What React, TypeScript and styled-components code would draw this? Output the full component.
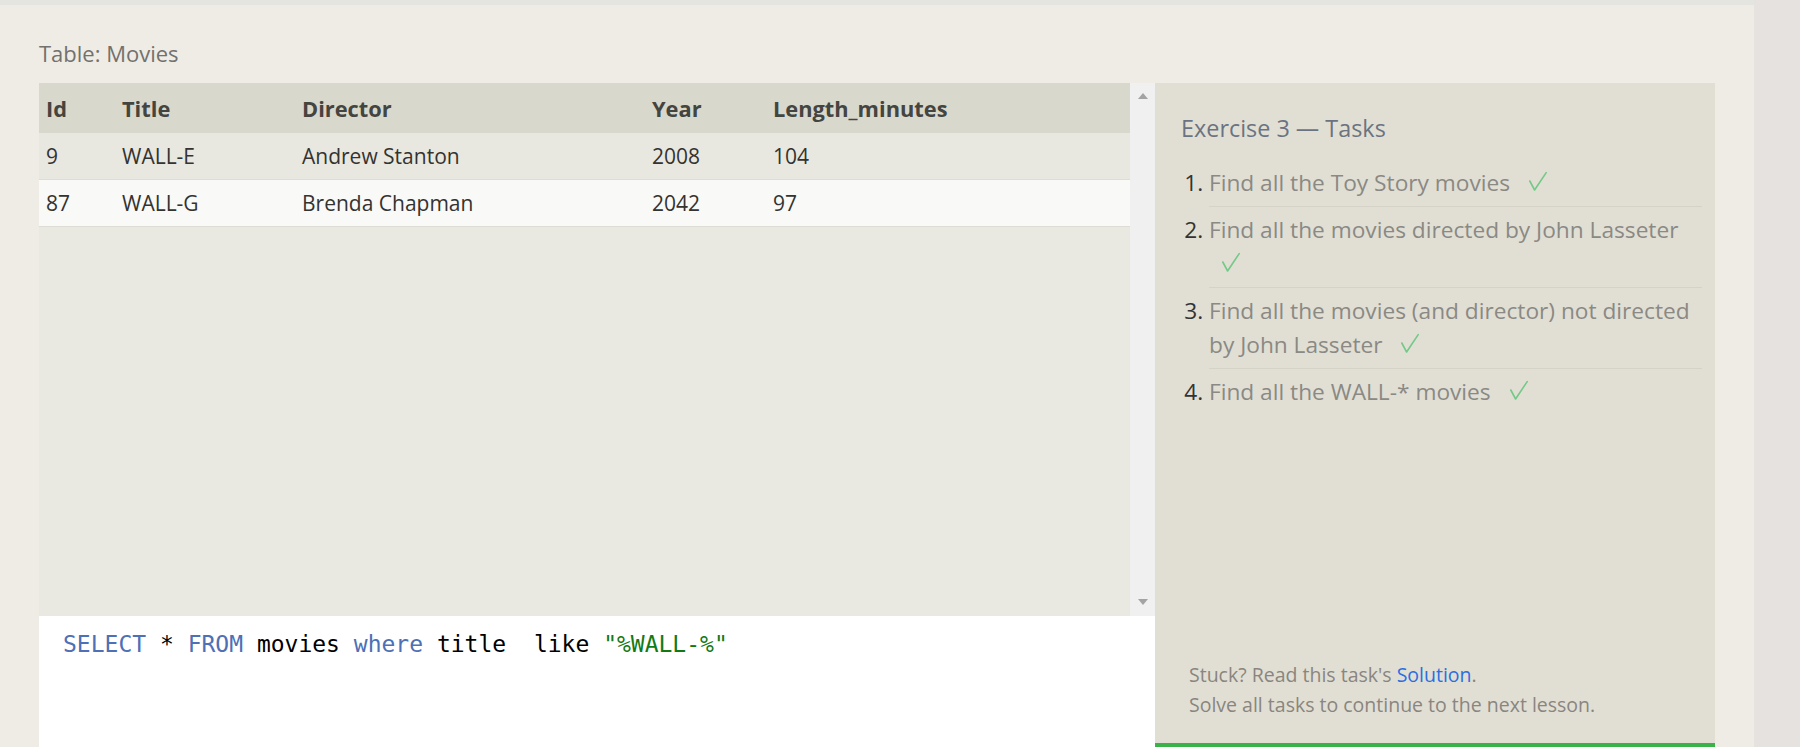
import styled, { createGlobalStyle } from "styled-components";

const GlobalStyle = createGlobalStyle`
  html, body {
    margin: 0;
    padding: 0;
    height: 747px;
    overflow: hidden;
  }
  body {
    font-family: "Open Sans", "Liberation Sans", sans-serif;
    background-color: #efece5;
  }
`;

type Movie = {
  id: number;
  title: string;
  director: string;
  year: number;
  length: number;
};

const movies: Movie[] = [
  { id: 9, title: "WALL-E", director: "Andrew Stanton", year: 2008, length: 104 },
  { id: 87, title: "WALL-G", director: "Brenda Chapman", year: 2042, length: 97 },
];

const columns = ["Id", "Title", "Director", "Year", "Length_minutes"];
const colWidths = [76, 180, 350, 121];

const tasks = [
  "Find all the Toy Story movies",
  "Find all the movies directed by John Lasseter",
  "Find all the movies (and director) not directed by John Lasseter",
  "Find all the WALL-* movies",
];

function Check() {
  return (
    <CheckMark width="18" height="19" viewBox="0 0 18 19">
      <polyline points="0.8,9 5.6,18 17.2,0.6" />
    </CheckMark>
  );
}

function App() {
  return (
    <Page>
      <GlobalStyle />
      <Main>
        <Caption>Table: Movies</Caption>
        <Workspace>
          <LeftColumn>
            <ResultsPane>
              <TableArea>
                <Table>
                  <colgroup>
                    {colWidths.map((w, i) => (
                      <col key={i} style={{ width: w }} />
                    ))}
                    <col />
                  </colgroup>
                  <thead>
                    <tr>
                      {columns.map((c) => (
                        <HeadCell key={c}>{c}</HeadCell>
                      ))}
                    </tr>
                  </thead>
                  <tbody>
                    {movies.map((m, i) => (
                      <Row key={m.id} $odd={i % 2 === 1}>
                        <Cell>{m.id}</Cell>
                        <Cell>{m.title}</Cell>
                        <Cell>{m.director}</Cell>
                        <Cell>{m.year}</Cell>
                        <Cell>{m.length}</Cell>
                      </Row>
                    ))}
                  </tbody>
                </Table>
              </TableArea>
              <ScrollTrack>
                <Arrow $dir="up" />
                <Arrow $dir="down" />
              </ScrollTrack>
            </ResultsPane>
            <Editor>
              <Code>
                <Keyword>SELECT</Keyword> * <Keyword>FROM</Keyword> movies{" "}
                <Keyword>where</Keyword> title{"  "}like{" "}
                <Str>"%WALL-%"</Str>
              </Code>
            </Editor>
          </LeftColumn>
          <TaskPanel>
            <TaskTitle>Exercise 3 — Tasks</TaskTitle>
            <TaskList>
              {tasks.map((t) => (
                <TaskItem key={t}>
                  {t} <Check />
                </TaskItem>
              ))}
            </TaskList>
            <Footer>
              Stuck? Read this task's <SolutionLink href="#">Solution</SolutionLink>.
              <br />
              Solve all tasks to continue to the next lesson.
            </Footer>
          </TaskPanel>
        </Workspace>
      </Main>
      <SideStrip />
    </Page>
  );
}

export default App;

const Page = styled.div`
  display: flex;
  width: 100%;
  height: 747px;
  overflow: hidden;
`;

const Main = styled.main`
  flex: 1;
  display: flex;
  flex-direction: column;
  padding: 0 39px;
  border-top: 5px solid #e4e4e1;
  background-color: #efece5;
  min-width: 0;
`;

const SideStrip = styled.div`
  width: 46px;
  flex-shrink: 0;
  background-color: #e6e2df;
`;

const Caption = styled.div`
  margin: 33px 0 15px;
  font-size: 22px;
  line-height: 30px;
  color: #72716d;
`;

const Workspace = styled.div`
  display: grid;
  grid-template-columns: 1116px 560px;
  flex: 1;
  min-height: 0;
`;

const LeftColumn = styled.div`
  display: flex;
  flex-direction: column;
  min-height: 0;
`;

const ResultsPane = styled.div`
  display: flex;
  height: 533px;
  flex-shrink: 0;
`;

const TableArea = styled.div`
  flex: 1;
  background-color: #e9e8e1;
`;

const Table = styled.table`
  width: 100%;
  border-collapse: collapse;
  table-layout: fixed;
  font-size: 21px;
`;

const HeadCell = styled.th`
  height: 50px;
  padding: 0 7px;
  text-align: left;
  font-size: 21.8px;
  font-weight: 700;
  color: #444440;
  background-color: #d9d8cc;
`;

const Row = styled.tr<{ $odd: boolean }>`
  background-color: ${(p) => (p.$odd ? "#f9f9f8" : "#e9e8e0")};
  border-bottom: 1px solid #dddcd5;
`;

const Cell = styled.td`
  height: 46px;
  padding: 0 7px;
  color: #333330;
`;

const ScrollTrack = styled.div`
  width: 25px;
  display: flex;
  flex-direction: column;
  align-items: center;
  justify-content: space-between;
  padding: 10px 0 11px;
  box-sizing: border-box;
  background-color: #f0f0f0;
`;

const Arrow = styled.div<{ $dir: "up" | "down" }>`
  width: 0;
  height: 0;
  border-left: 5px solid transparent;
  border-right: 5px solid transparent;
  ${(p) =>
    p.$dir === "up"
      ? "border-bottom: 6px solid #a3a3a3;"
      : "border-top: 6px solid #a3a3a3;"}
`;

const Editor = styled.div`
  flex: 1;
  background-color: #ffffff;
  padding: 12px 24px;
`;

const Code = styled.div`
  font-family: "DejaVu Sans Mono", "Liberation Mono", monospace;
  font-size: 23px;
  line-height: 32px;
  color: #000000;
  white-space: pre;
`;

const Keyword = styled.span`
  color: #4d70b6;
`;

const Str = styled.span`
  color: #137a13;
`;

const TaskPanel = styled.aside`
  display: flex;
  flex-direction: column;
  height: 664px;
  box-sizing: border-box;
  padding: 29px 13px 23px 26px;
  background-color: #e1dfd4;
  border-bottom: 4px solid #39b24a;
`;

const TaskTitle = styled.h3`
  margin: 0 0 16px;
  font-size: 23.4px;
  line-height: 32px;
  font-weight: 400;
  color: #6b7382;
`;

const TaskList = styled.ol`
  margin: 0;
  padding-left: 28px;
  list-style: decimal;
`;

const TaskItem = styled.li`
  padding: 6px 0;
  font-size: 22.7px;
  line-height: 34px;
  color: #8a8984;
  border-bottom: 1px solid #d5d3c8;

  &::marker {
    color: #333333;
  }

  &:last-child {
    border-bottom: none;
  }
`;

const CheckMark = styled.svg`
  margin-left: 13px;
  vertical-align: baseline;
  overflow: visible;

  polyline {
    fill: none;
    stroke: #74c888;
    stroke-width: 1.6;
    stroke-linecap: round;
    stroke-linejoin: round;
  }
`;

const Footer = styled.div`
  margin-top: auto;
  padding-left: 8px;
  font-size: 19.5px;
  line-height: 30px;
  color: #8a857f;
`;

const SolutionLink = styled.a`
  color: #2b6ee2;
  text-decoration: none;
`;
